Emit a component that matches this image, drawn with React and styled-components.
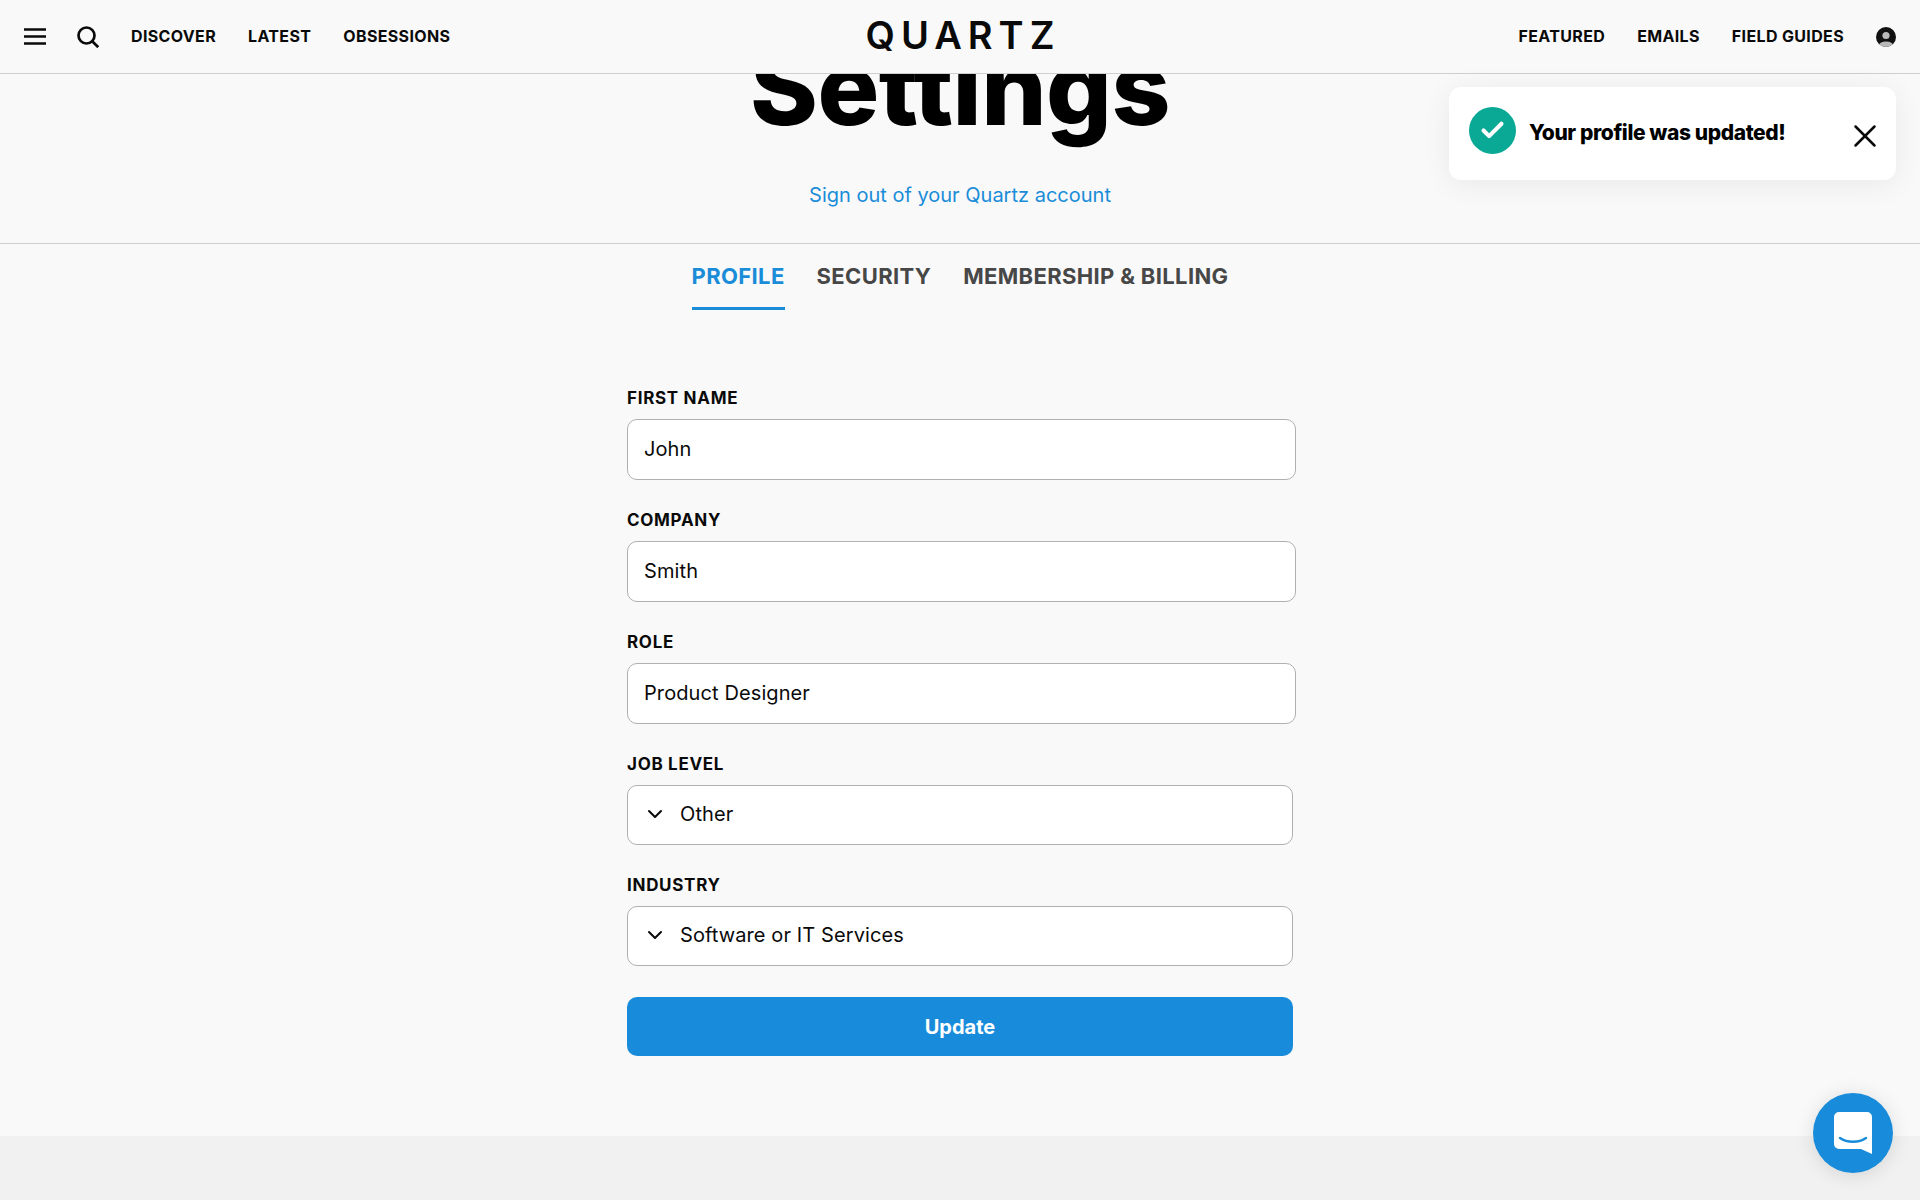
import React from "react";
import styled, { createGlobalStyle } from "styled-components";
import { ChevronDown, Check, X } from "lucide-react";

const GlobalStyle = createGlobalStyle`
  html, body {
    margin: 0;
    padding: 0;
    background: #f9f9f9;
    font-family: Inter, "Liberation Sans", sans-serif;
    color: #000;
  }
  * { box-sizing: border-box; }
`;

const Page = styled.div`
  height: 1200px;
  overflow: hidden;
  position: relative;
  display: flex;
  flex-direction: column;
`;

const Header = styled.header`
  position: absolute;
  top: 0;
  left: 0;
  right: 0;
  height: 74px;
  background: #f9f9f9;
  border-bottom: 1px solid #cfcfcf;
  display: flex;
  align-items: center;
  justify-content: space-between;
  padding: 0 24px;
  z-index: 2;
`;

const NavGroup = styled.nav`
  display: flex;
  align-items: center;
  gap: 32px;
`;

const IconButton = styled.span`
  display: flex;
  align-items: center;
  margin-right: ${(p) => p.$gap || 0}px;
`;

const NavLink = styled.a`
  font-size: 16px;
  font-weight: 700;
  letter-spacing: 0.35px;
  margin-bottom: 2px;
  color: #0a0a0a;
  text-transform: uppercase;
  white-space: nowrap;
`;

const Logo = styled.div`
  position: absolute;
  left: 50%;
  top: 12px;
  transform: translateX(-50%);
  font-size: 38px;
  line-height: 46px;
  font-weight: 600;
  letter-spacing: 6px;
  padding-left: 6px;
  color: #0a0a0a;
`;

const Hero = styled.section`
  height: 244px;
  flex: none;
  border-bottom: 1px solid #cfcfcf;
  display: flex;
  flex-direction: column;
  align-items: center;
`;

const Title = styled.h1`
  margin: 30px 0 0;
  font-size: 103px;
  line-height: 116px;
  font-weight: 800;
  letter-spacing: -0.5px;
  color: #000;
`;

const SignOut = styled.a`
  margin-top: 37px;
  font-size: 20px;
  line-height: 24px;
  color: #1a8cd8;
`;

const Tabs = styled.div`
  display: flex;
  justify-content: center;
  gap: 32px;
  height: 66px;
  flex: none;
`;

const Tab = styled.a`
  height: 66px;
  padding-top: 19px;
  font-size: 22px;
  line-height: 27px;
  font-weight: 700;
  letter-spacing: 0.35px;
  color: ${(p) => (p.$active ? "#1a8cd8" : "#474747")};
  border-bottom: 3px solid ${(p) => (p.$active ? "#1a8cd8" : "transparent")};
`;

const Form = styled.form`
  width: 669px;
  margin: 78px 0 0 calc(50% - 333px);
  display: flex;
  flex-direction: column;
`;

const Field = styled.div`
  display: flex;
  flex-direction: column;
  margin-bottom: 30px;
`;

const Label = styled.label`
  font-size: 17px;
  line-height: 20px;
  font-weight: 700;
  letter-spacing: 0.7px;
  color: #0a0a0a;
  margin-bottom: 11px;
`;

const TextBox = styled.div`
  height: 61px;
  background: #fff;
  border: 1px solid #b0b0b0;
  border-radius: 10px;
  display: flex;
  align-items: center;
  padding: 0 16px 2px;
  font-size: 20px;
  letter-spacing: 0.1px;
  color: #0a0a0a;
`;

const SelectBox = styled(TextBox)`
  height: 60px;
  width: 666px;
  padding: 0 15px 2px;
  gap: 13px;
`;

const UpdateButton = styled.button`
  width: 666px;
  height: 59px;
  margin-top: 1px;
  border: 0;
  border-radius: 10px;
  background: #188cdb;
  color: #fff;
  font-family: inherit;
  font-size: 20px;
  font-weight: 700;
`;

const Footer = styled.footer`
  margin-top: auto;
  height: 64px;
  flex: none;
  background: #f1f1f1;
`;

const Toast = styled.div`
  position: absolute;
  top: 87px;
  right: 24px;
  width: 447px;
  height: 93px;
  background: #fff;
  border-radius: 12px;
  box-shadow: 0 4px 30px rgba(0, 0, 0, 0.07);
  display: flex;
  align-items: center;
  padding: 0 20px;
  z-index: 3;
`;

const ToastBadge = styled.span`
  width: 47px;
  height: 47px;
  border-radius: 50%;
  background: #0aa996;
  color: #fff;
  display: flex;
  align-items: center;
  justify-content: center;
  flex: none;
  margin-bottom: 7px;
`;

const ToastText = styled.span`
  margin-left: 13px;
  margin-bottom: 2px;
  font-size: 21px;
  font-weight: 800;
  letter-spacing: -0.4px;
  flex: 1;
`;

const ToastClose = styled.span`
  display: flex;
  margin-top: 5px;
  margin-right: -8px;
`;

const ChatBubble = styled.div`
  position: absolute;
  right: 27px;
  bottom: 27px;
  width: 80px;
  height: 80px;
  border-radius: 50%;
  background: #188cdb;
  box-shadow: 0 2px 20px rgba(0, 0, 0, 0.12);
  display: flex;
  align-items: center;
  justify-content: center;
  z-index: 3;
`;

function MenuIcon() {
  return (
    <svg width="22" height="18" viewBox="0 0 22 18" fill="none" stroke="#0a0a0a" strokeWidth="2.4">
      <path d="M0 1.5h22M0 8.5h22M0 15.5h22" />
    </svg>
  );
}

function SearchIcon() {
  return (
    <svg width="22" height="22" viewBox="0 0 22 22" fill="none" stroke="#0a0a0a" strokeWidth="2.7">
      <circle cx="9.5" cy="9.5" r="8" />
      <path d="M15.2 15.2l6 6" />
    </svg>
  );
}

function AvatarIcon() {
  return (
    <svg width="20" height="20" viewBox="0 0 20 20">
      <defs>
        <clipPath id="avatar-clip">
          <circle cx="10" cy="10" r="10" />
        </clipPath>
      </defs>
      <circle cx="10" cy="10" r="10" fill="#111" />
      <g clipPath="url(#avatar-clip)" fill="#b9b9b9">
        <circle cx="10" cy="8.5" r="3.6" />
        <ellipse cx="10" cy="19" rx="7.5" ry="4.5" />
      </g>
    </svg>
  );
}

function ChatIcon() {
  return (
    <svg width="38" height="42" viewBox="0 0 38 42">
      <path d="M5 0h28a5 5 0 0 1 5 5v37l-11-5H5a5 5 0 0 1-5-5V5a5 5 0 0 1 5-5z" fill="#fff" />
      <path d="M6 26c7 5 19 5 26 0" fill="none" stroke="#188cdb" strokeWidth="2.4" strokeLinecap="round" />
    </svg>
  );
}

const fields = [
  { label: "First name", value: "John" },
  { label: "Company", value: "Smith" },
  { label: "Role", value: "Product Designer" },
];

const selects = [
  { label: "Job level", value: "Other" },
  { label: "Industry", value: "Software or IT Services" },
];

export default function App() {
  return (
    <Page>
      <GlobalStyle />
      <Header>
        <NavGroup>
          <IconButton $gap={-1}>
            <MenuIcon />
          </IconButton>
          <IconButton>
            <SearchIcon />
          </IconButton>
          <NavLink>Discover</NavLink>
          <NavLink>Latest</NavLink>
          <NavLink>Obsessions</NavLink>
        </NavGroup>
        <Logo>QUARTZ</Logo>
        <NavGroup>
          <NavLink>Featured</NavLink>
          <NavLink>Emails</NavLink>
          <NavLink>Field Guides</NavLink>
          <IconButton>
            <AvatarIcon />
          </IconButton>
        </NavGroup>
      </Header>

      <Toast>
        <ToastBadge>
          <Check size={27} strokeWidth={3.6} />
        </ToastBadge>
        <ToastText>Your profile was updated!</ToastText>
        <ToastClose>
          <X size={38} strokeWidth={1.6} color="#0a0a0a" />
        </ToastClose>
      </Toast>

      <Hero>
        <Title>Settings</Title>
        <SignOut>Sign out of your Quartz account</SignOut>
      </Hero>

      <Tabs>
        <Tab $active>PROFILE</Tab>
        <Tab>SECURITY</Tab>
        <Tab>MEMBERSHIP &amp; BILLING</Tab>
      </Tabs>

      <Form>
        {fields.map((f) => (
          <Field key={f.label}>
            <Label>{f.label.toUpperCase()}</Label>
            <TextBox>{f.value}</TextBox>
          </Field>
        ))}
        {selects.map((s) => (
          <Field key={s.label}>
            <Label>{s.label.toUpperCase()}</Label>
            <SelectBox>
              <ChevronDown size={24} strokeWidth={2} />
              {s.value}
            </SelectBox>
          </Field>
        ))}
        <UpdateButton type="button">Update</UpdateButton>
      </Form>

      <Footer />
      <ChatBubble>
        <ChatIcon />
      </ChatBubble>
    </Page>
  );
}
